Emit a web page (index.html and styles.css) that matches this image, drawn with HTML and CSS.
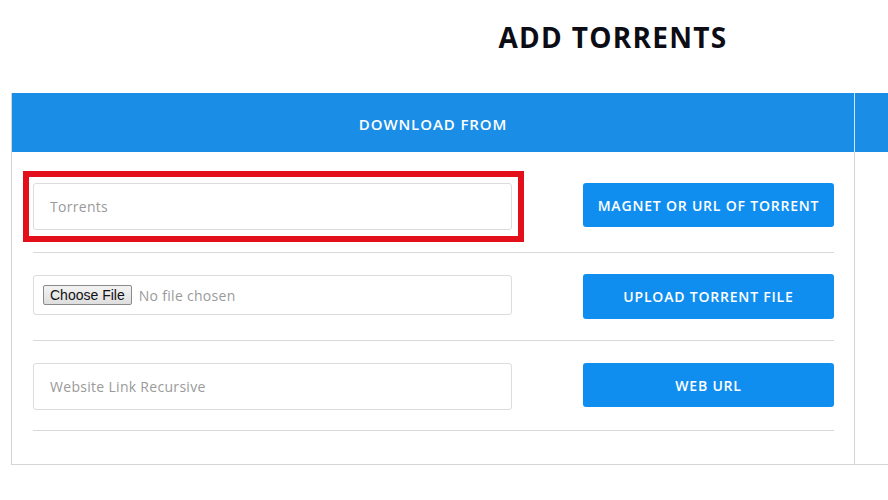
FILE: index.html
```html
<!DOCTYPE html>
<html lang="en">
<head>
<meta charset="utf-8">
<title>Add Torrents</title>
<link rel="stylesheet" href="styles.css">
</head>
<body>
<div class="page">
  <h1 class="title">ADD TORRENTS</h1>
  <div class="panel">
    <div class="col col-main">
      <div class="col-head">DOWNLOAD FROM</div>
      <div class="col-body">
        <div class="row row-first">
          <div class="highlight">
            <div class="field"><span class="placeholder">Torrents</span></div>
          </div>
          <button class="btn">MAGNET OR URL OF TORRENT</button>
        </div>
        <div class="row row-file">
          <label class="field field-file"><span class="file-btn">Choose File</span><span class="file-text">No file chosen</span></label>
          <button class="btn btn-tall">UPLOAD TORRENT FILE</button>
        </div>
        <div class="row row-last">
          <div class="field"><span class="placeholder">Website Link Recursive</span></div>
          <button class="btn">WEB URL</button>
        </div>
      </div>
    </div>
    <div class="col col-side">
      <div class="col-head"></div>
      <div class="col-body"></div>
    </div>
  </div>
</div>
</body>
</html>
```

FILE: styles.css
```css
html, body {
  margin: 0;
  padding: 0;
  background: #ffffff;
}
body {
  font-family: "Open Sans", "Liberation Sans", sans-serif;
  color: #111;
}
.title {
  margin: 0;
  padding: 19px 0 0 338px;
  height: 93px;
  box-sizing: border-box;
  text-align: center;
  font-size: 28px;
  line-height: 36px;
  font-weight: 700;
  color: #0c0c14;
  letter-spacing: 1.3px;
}
.panel {
  display: flex;
  margin-left: 11px;
  border-bottom: 1px solid #d6d6d6;
}
.col-main {
  width: 842px;
  flex: none;
  border-left: 1px solid #d4d4d4;
}
.col-side {
  flex: 1;
  border-left: 1px solid #d4d4d4;
}
.col-head {
  height: 59px;
  background: #1a8ee6;
  color: #ffffff;
  font-size: 15px;
  font-weight: 600;
  display: flex;
  align-items: center;
  justify-content: center;
  letter-spacing: 0.9px;
  padding-top: 2px;
  box-sizing: border-box;
}
.col-side .col-head {
  border-left: 1px solid #cfe6fa;
  margin-left: -1px;
}
.col-body {
  padding: 31px 20px 33px 21px;
}
.row {
  display: flex;
  justify-content: space-between;
  align-items: flex-start;
  border-bottom: 1px solid #d9d9d9;
  padding-bottom: 22px;
}
.row-file {
  margin-top: 21px;
  padding-bottom: 21px;
}
.row-last {
  margin-top: 22px;
  padding-bottom: 20px;
}
.highlight {
  margin: -12px -12px -12px -10px;
  padding: 6px 6px 6px 4px;
  border: 6px solid #e3101c;
}
.field {
  width: 479px;
  height: 47px;
  box-sizing: border-box;
  border: 1px solid #dcdcdc;
  border-radius: 3px;
  display: flex;
  align-items: center;
  padding-left: 16px;
  background: #fff;
}
.placeholder {
  font-size: 14px;
  color: #9a9a9a;
  letter-spacing: 0.3px;
}
.field-file {
  height: 40px;
  margin-top: 1px;
  padding-left: 9px;
}
.file-btn {
  font-family: "Liberation Sans", Arial, sans-serif;
  font-size: 14px;
  color: #111;
  background: linear-gradient(#f3f3f3, #dedede);
  border: 1px solid #8a8a8a;
  border-radius: 2px;
  padding: 1px 6px;
  line-height: 16px;
}
.file-text {
  font-size: 14px;
  color: #9a9a9a;
  margin-left: 7px;
  letter-spacing: 0.3px;
}
.btn {
  width: 251px;
  height: 44px;
  border: none;
  border-radius: 3px;
  background: #0f8ef0;
  color: #ffffff;
  font-family: "Open Sans", "Liberation Sans", sans-serif;
  font-size: 14px;
  font-weight: 600;
  letter-spacing: 0.8px;
  padding: 0;
  margin: 0;
}
.btn-tall {
  height: 45px;
}
```
